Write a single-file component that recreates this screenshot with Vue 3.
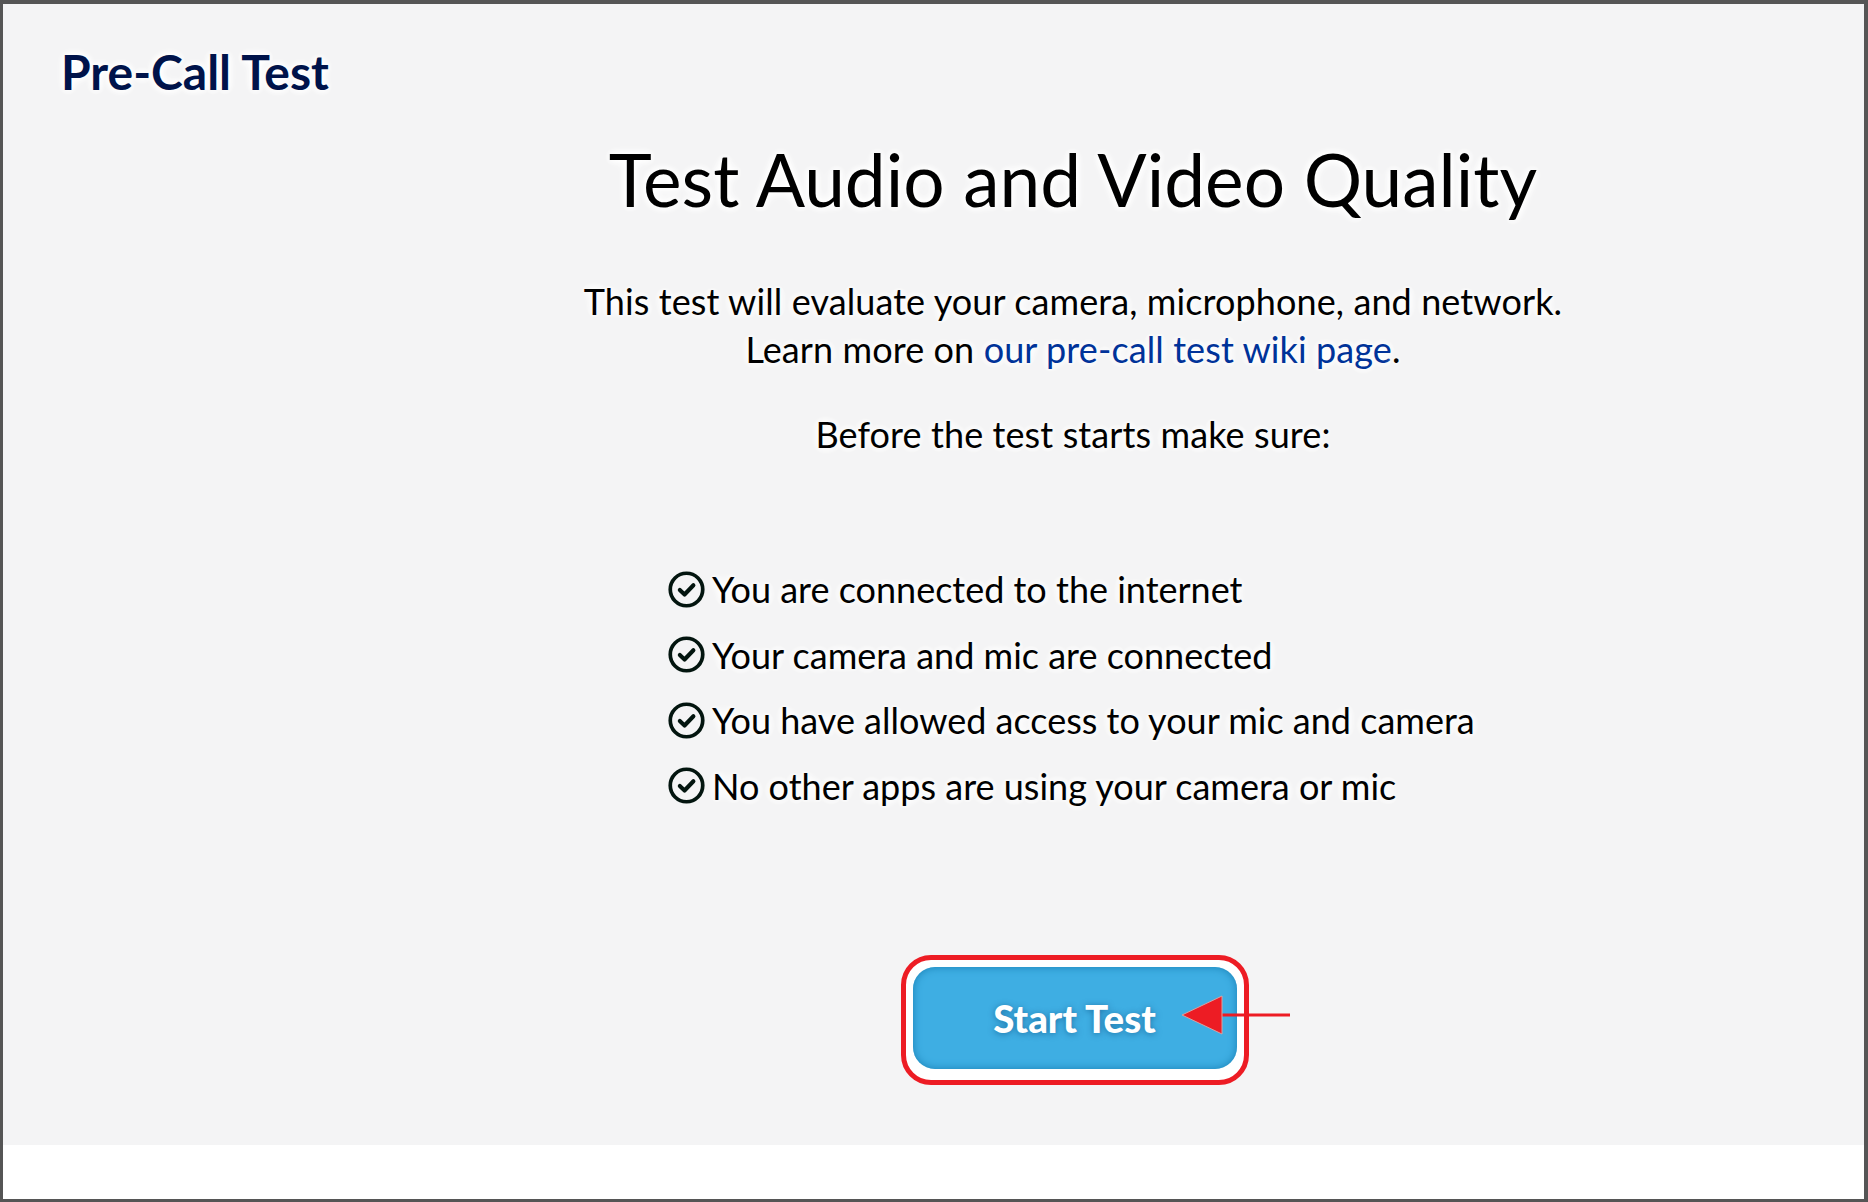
<script setup>
const checks = [
  "You are connected to the internet",
  "Your camera and mic are connected",
  "You have allowed access to your mic and camera",
  "No other apps are using your camera or mic",
];
</script>

<template>
  <div class="frame">
    <div class="page">
      <aside class="sidebar">
        <h2 class="brand">Pre-Call Test</h2>
      </aside>

      <main class="content">
        <h1 class="title">Test Audio and Video Quality</h1>

        <p class="intro">
          This test will evaluate your camera, microphone, and network.<br />
          Learn more on <a href="#" class="link">our pre-call test wiki page</a>.
        </p>
        <p class="before">Before the test starts make sure:</p>

        <ul class="checks">
          <li v-for="item in checks" :key="item" class="check">
            <svg class="check-icon" viewBox="0 0 36 36" fill="none" stroke="#03150f" aria-hidden="true">
              <circle cx="18" cy="18" r="15.8" stroke-width="3.6" />
              <path d="M11.5 18.5l4.6 4.4 8.6-9" stroke-width="4" stroke-linecap="round" stroke-linejoin="round" />
            </svg>
            <span>{{ item }}</span>
          </li>
        </ul>

        <div class="highlight">
          <button class="start" type="button">Start Test</button>
          <svg class="arrow" width="112" height="40" viewBox="0 0 112 40" aria-hidden="true">
            <path d="M40 18.6h69v3H40z" fill="#ed1c24" />
            <path d="M1 20L41 1v38z" fill="#ed1c24" stroke="#d8a0a0" stroke-width="1" />
          </svg>
        </div>
      </main>
    </div>
  </div>
</template>

<style scoped>
.frame {
  box-sizing: border-box;
  height: 1202px;
  border: solid #555;
  border-width: 4px 4px 3px 3px;
  background: #fff;
  font-family: Lato, "Open Sans", sans-serif;
  color: #000;
}

.page {
  display: flex;
  height: 1141px;
  background: #f4f4f5;
}

.sidebar {
  flex: 0 0 279px;
  min-width: 0;
  padding: 40px 0 0 58px;
  box-sizing: border-box;
}

.brand {
  margin: 0;
  font-size: 48px;
  line-height: 56px;
  font-weight: 700;
  color: #00134a;
  white-space: nowrap;
  text-shadow: 0 0 6px #fff, 0 0 8px #fff, 0 0 10px #fff, 0 0 12px #fff;
}

.content {
  flex: 1;
  display: flex;
  flex-direction: column;
  align-items: center;
  text-shadow: 0 0 6px #fff, 0 0 8px #fff, 0 0 10px #fff, 0 0 12px #fff;
}

.title {
  margin: 131px 0 0;
  font-size: 73px;
  line-height: 88px;
  font-weight: 400;
}

.intro,
.before {
  margin: 0;
  font-size: 36px;
  line-height: 48px;
  letter-spacing: 0.1px;
  text-align: center;
}

.intro {
  margin-top: 54px;
}

.before {
  margin-top: 37px;
}

.link {
  color: #003399;
  text-decoration: none;
}

.checks {
  list-style: none;
  margin: 107px 0 0 386px;
  padding: 0;
  align-self: flex-start;
  display: flex;
  flex-direction: column;
  gap: 17.5px;
}

.check {
  display: flex;
  align-items: center;
  gap: 7px;
  font-size: 36px;
  line-height: 48px;
}

.check-icon {
  width: 37px;
  height: 37px;
  flex: none;
}

.highlight {
  position: relative;
  margin: 145.5px 0 0 3px;
  box-sizing: border-box;
  width: 348px;
  height: 130px;
  padding: 7px;
  border: 5px solid #ed1c24;
  border-radius: 30px;
  background: #fff;
}

.start {
  display: block;
  width: 100%;
  height: 102px;
  border: none;
  border-radius: 22px;
  background: #3eaee3;
  box-shadow: inset 0 0 8px #1a80b5;
  color: #fff;
  font-family: inherit;
  font-size: 38.5px;
  font-weight: 900;
  text-shadow: 0 1px 6px rgba(0, 60, 110, 0.5);
}

.arrow {
  position: absolute;
  left: 275px;
  top: 35px;
}
</style>
